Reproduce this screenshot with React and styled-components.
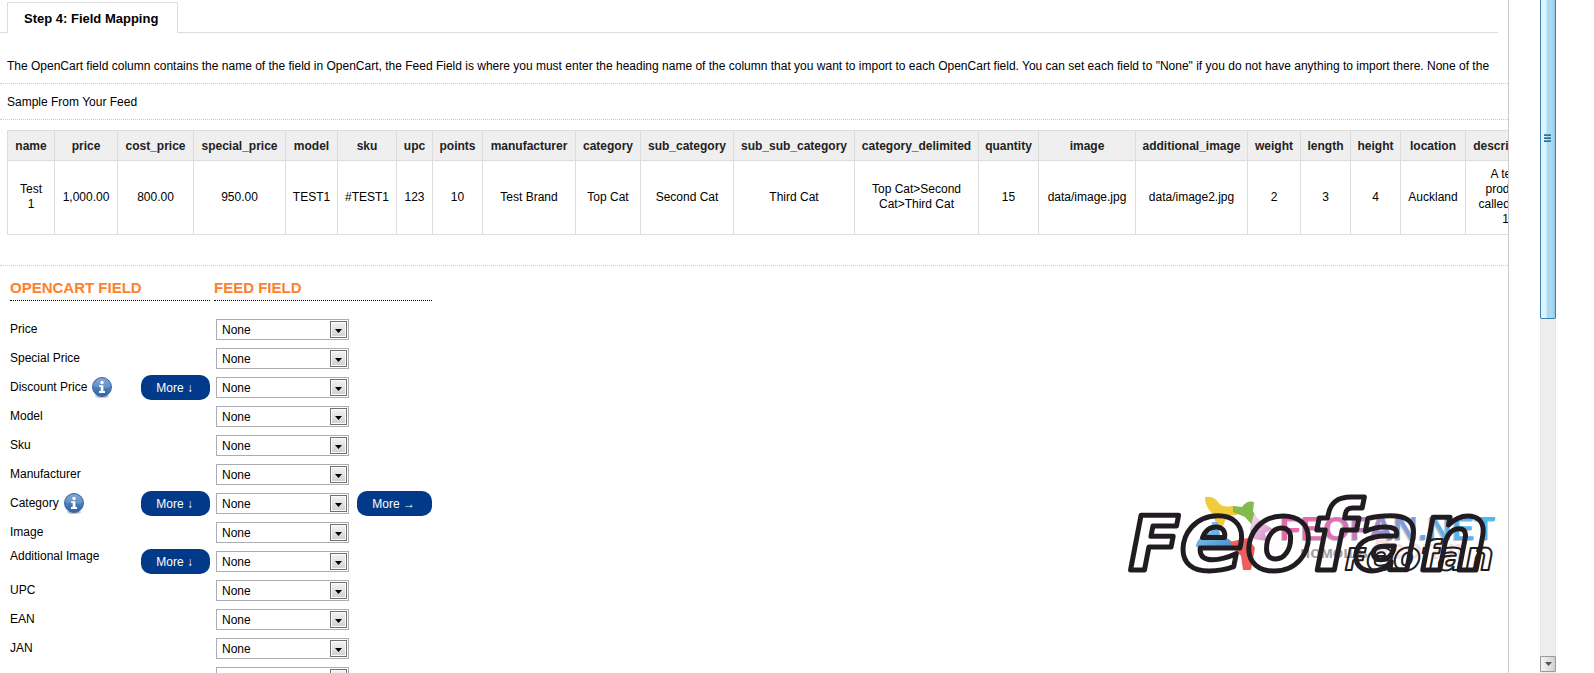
import { useId } from 'react';
import styled, { createGlobalStyle } from 'styled-components';

const GlobalStyle = createGlobalStyle`
  * {
    box-sizing: border-box;
  }

  body {
    margin: 0;
    background: #fff;
    color: #000;
    font-family: 'Liberation Sans', Arial, sans-serif;
    font-size: 12px;
    line-height: 15px;
  }
`;

const Page = styled.div`
  display: flex;
  height: 100vh;
  overflow: hidden;
`;

const Panel = styled.main`
  position: relative;
  flex: 1;
  min-width: 0;
  overflow: hidden;
  border-right: 1px solid #ccc;
`;

const Tabs = styled.div`
  display: flex;
  margin-right: 10px;
  padding: 2px 0 0 7px;
  box-shadow: inset 0 -1px #ddd;
`;

const Tab = styled.button`
  height: 31px;
  padding: 0 19px 0 16px;
  border: 1px solid #ddd;
  border-bottom: none;
  background: #fff;
  color: #000;
  font: bold 13px 'Liberation Sans', Arial, sans-serif;
`;

const Line = styled.p`
  margin: 0;
  padding: ${props => props.$top || 11}px 7px 9px;
  border-bottom: 1px dotted #ccc;
  white-space: nowrap;
`;

const SampleWrap = styled.div`
  padding: 10px 0 30px 7px;
  border-bottom: 1px dotted #ccc;
`;

const SampleTable = styled.table`
  width: 1538px;
  table-layout: fixed;
  border-collapse: collapse;
  text-align: center;

  th,
  td {
    border: 1px solid #ddd;
  }

  th {
    padding: 8px 0 6px;
    background: #efefef;
    color: #222;
  }

  td {
    padding: 6px 6px 7px;
    white-space: pre-line;
  }
`;

const Mapping = styled.form`
  display: grid;
  gap: 4px;
  padding: 13px 10px;
`;

const Row = styled.div`
  display: grid;
  grid-template-columns: 200px 218px;
  column-gap: 4px;
  height: 25px;
`;

const HeadRow = styled(Row)`
  height: auto;
  margin-bottom: 12px;
`;

const Heading = styled.h2`
  margin: 0;
  padding-bottom: 4px;
  border-bottom: 1px dotted #000;
  color: #ff802b;
  font-size: 15px;
  line-height: 17px;
`;

const NameCell = styled.div`
  display: flex;
  align-items: ${props => (props.$top ? 'flex-start' : 'center')};
  gap: 5px;
`;

const FeedCell = styled.div`
  display: flex;
  align-items: center;
  gap: 8px;
  padding-left: 2px;
`;

const MoreButton = styled.button`
  height: 25px;
  margin-left: auto;
  padding: 0 17px 0 15px;
  border: none;
  border-radius: 10px;
  background: #003a88;
  color: #fff;
  font: 12px 'Liberation Sans', Arial, sans-serif;
  white-space: nowrap;
  cursor: pointer;
`;

const SelectBox = styled.div`
  position: relative;
  width: 133px;
`;

const Select = styled.select`
  display: block;
  appearance: none;
  width: 100%;
  height: 21px;
  padding: 0 20px 0 5px;
  border: 1px solid #abadb3;
  border-radius: 0;
  background: #fff;
  color: #000;
  font: 12px 'Liberation Sans', Arial, sans-serif;
`;

const SelectArrow = styled.span`
  position: absolute;
  top: 2px;
  right: 2px;
  display: grid;
  place-items: center;
  width: 17px;
  height: 17px;
  padding-top: 3px;
  border: 1px solid #707070;
  background: linear-gradient(#f4f4f4, #cfcfcf);
  box-shadow: inset 0 0 0 1px #fcfcfc;
  pointer-events: none;
`;

const ScrollBar = styled.div`
  display: flex;
  flex-direction: column;
  justify-content: space-between;
  width: 16px;
  margin: 0 38px 0 31px;
  padding-bottom: 1px;
  background: #eee;
  border-left: 1px solid #e6e6e6;
  border-right: 1px solid #e6e6e6;
`;

const Thumb = styled.div`
  height: 319px;
  margin: 0 -1px;
  padding: 134px 0 0 3px;
  border: 1px solid #3c7fb1;
  border-top: none;
  border-radius: 0 0 2px 2px;
  background: linear-gradient(90deg, #dff3fd 0 5px, #a9dbf5 6px 11px, #8cc5e4);
`;

const Grip = styled.div`
  width: 7px;
  height: 2px;
  margin-bottom: 1px;
  background: #5493b5;
  border-bottom: 1px solid #3a6e8c;
`;

const ScrollDown = styled.button`
  display: grid;
  place-items: center;
  width: 16px;
  height: 16px;
  margin: 0 -1px;
  padding: 0;
  border: 1px solid #999;
  border-radius: 1px;
  background: linear-gradient(90deg, #f6f6f6, #d0d0d0);
`;

const Watermark = styled.svg`
  position: absolute;
  top: 490px;
  right: 8px;
  pointer-events: none;
`;

const sample = [
  { name: 'name', value: 'Test\n1', width: 47 },
  { name: 'price', value: '1,000.00', width: 63 },
  { name: 'cost_price', value: '800.00', width: 76 },
  { name: 'special_price', value: '950.00', width: 92 },
  { name: 'model', value: 'TEST1', width: 52 },
  { name: 'sku', value: '#TEST1', width: 59 },
  { name: 'upc', value: '123', width: 36 },
  { name: 'points', value: '10', width: 50 },
  { name: 'manufacturer', value: 'Test Brand', width: 93 },
  { name: 'category', value: 'Top Cat', width: 65 },
  { name: 'sub_category', value: 'Second Cat', width: 93 },
  { name: 'sub_sub_category', value: 'Third Cat', width: 121 },
  { name: 'category_delimited', value: 'Top Cat>Second\nCat>Third Cat', width: 124 },
  { name: 'quantity', value: '15', width: 60 },
  { name: 'image', value: 'data/image.jpg', width: 97 },
  { name: 'additional_image', value: 'data/image2.jpg', width: 112 },
  { name: 'weight', value: '2', width: 53 },
  { name: 'length', value: '3', width: 50 },
  { name: 'height', value: '4', width: 50 },
  { name: 'location', value: 'Auckland', width: 65 },
  { name: 'description', value: 'A test\nproduct\ncalled test\n1', width: 80 },
];

const fields = [
  { label: 'Price' },
  { label: 'Special Price' },
  { label: 'Discount Price', info: true, down: true },
  { label: 'Model' },
  { label: 'Sku' },
  { label: 'Manufacturer' },
  { label: 'Category', info: true, down: true, right: true },
  { label: 'Image' },
  { label: 'Additional Image', down: true, top: true },
  { label: 'UPC' },
  { label: 'EAN' },
  { label: 'JAN' },
];

const InfoIcon = () => {
  const id = useId();
  return (
    <svg width="20" height="21" viewBox="0 0 20 21" aria-hidden="true">
      <defs>
        <linearGradient id={id} x1="0" y1="0" x2="0" y2="1">
          <stop offset="0" stopColor="#6f9bd0" />
          <stop offset="1" stopColor="#2f62a8" />
        </linearGradient>
      </defs>
      <ellipse cx="10" cy="19" rx="7" ry="2" fill="#c4c4c4" />
      <circle cx="10" cy="10" r="9.5" fill={`url(#${id})`} stroke="#3c69a5" />
      <path d="M1.5 10a8.5 8.5 0 0 1 17 0c-5 2-11-1-17 0z" fill="#fff" opacity=".14" />
      <circle cx="10" cy="5.5" r="1.7" fill="#fff" />
      <path d="M7.2 8.3h4.2v5.8H13V16H7v-1.9h1.7V10H7.2z" fill="#fff" />
    </svg>
  );
};

const ArrowDown = ({ color = '#000' }) => (
  <svg width="7" height="4" viewBox="0 0 7 4" aria-hidden="true">
    <path d="M0 0h7L3.5 4z" fill={color} />
  </svg>
);

const FeedSelect = props => (
  <SelectBox>
    <Select defaultValue="None" {...props}>
      <option>None</option>
      {sample.map(col => <option key={col.name}>{col.name}</option>)}
    </Select>
    <SelectArrow><ArrowDown /></SelectArrow>
  </SelectBox>
);

const FieldRow = ({ label, info, down, right, top }) => {
  const id = useId();
  return (
    <Row>
      <NameCell $top={top}>
        <label htmlFor={id}>{label}</label>
        {info && <InfoIcon />}
        {down && <MoreButton type="button">More ↓</MoreButton>}
      </NameCell>
      <FeedCell>
        <FeedSelect id={id} />
        {right && <MoreButton type="button">More →</MoreButton>}
      </FeedCell>
    </Row>
  );
};

const Logo = () => (
  <Watermark width="380" height="90" viewBox="0 0 380 90" role="img" aria-label="Feofan.net">
    <defs>
      <linearGradient id="net" gradientUnits="userSpaceOnUse" x1="160" y1="0" x2="374" y2="0">
        <stop offset="0" stopColor="#ee62a8" />
        <stop offset=".28" stopColor="#dc72b6" />
        <stop offset=".5" stopColor="#9093d2" />
        <stop offset=".75" stopColor="#5fb2e6" />
        <stop offset="1" stopColor="#4fb9ee" />
      </linearGradient>
      <linearGradient id="pink" x1="0" y1="0" x2="1" y2="1">
        <stop offset="0" stopColor="#f7e3f2" />
        <stop offset="1" stopColor="#d383c4" />
      </linearGradient>
      <linearGradient id="blue" x1="0" y1="0" x2="1" y2="1">
        <stop offset="0" stopColor="#8fd0f2" />
        <stop offset="1" stopColor="#3f8ac8" />
      </linearGradient>
    </defs>

    {/* pinwheel of coloured figures */}
    <path d="M85 7q9-1 13 5t14 4l9 2-4 7-10 1-4 10-7-1-2-10q-9-7-9-18z" fill="#f2cb3b" />
    <path d="M113 16l9 1q5-7 12-5l-1 9q3 6 7 13l-7 2-8-9-12-5z" fill="#83b94d" />
    <path d="M134 24q7 9 19 15l-8 4 2 8-14-2-3-10z" fill="url(#pink)" />
    <path d="M92 32h6l2 14q9 1 16 10l-10 3q-15-4-30-2 0-10 15-15z" fill="url(#blue)" />
    <path d="M110 52l12-3 6-1 7 10-4 22h-8l-2-14q-8-8-11-14z" fill="#ee5f5b" />

    <g fontFamily="'Liberation Sans', Arial, sans-serif" fontWeight="bold">
      <text x="159" y="51" fontSize="34" fill="#c4c4c4">FEOFAN.NET</text>
      <text x="160" y="50" fontSize="34" fill="url(#net)">FEOFAN.NET</text>
      <text x="180" y="68" fontSize="17" fill="#a2a0a0">помощь</text>
      <text x="252" y="69" fontSize="28" fontStyle="italic" fill="#b33a3a" opacity=".15">Feofan</text>
    </g>

    <g
      fontFamily="'DejaVu Sans', sans-serif"
      fontWeight="bold"
      fontStyle="italic"
      fill="none"
      stroke="#211c22"
      strokeLinejoin="round"
    >
      <text x="9" y="80" fontSize="74" strokeWidth="5">
        F<tspan fontSize="97">eofan</tspan>
      </text>
      <text x="225" y="80" fontSize="31" strokeWidth="2">
        F<tspan fontSize="40">eofan</tspan>
      </text>
    </g>
  </Watermark>
);

const App = () => (
  <>
    <GlobalStyle />
    <Page>
      <Panel>
        <Tabs>
          <Tab type="button">Step 4: Field Mapping</Tab>
        </Tabs>
        <Line $top={26}>
          The OpenCart field column contains the name of the field in OpenCart, the Feed Field is where you must enter the heading name of the column that you want to import to each OpenCart field. You can set each field to "None" if you do not have anything to import there. None of the
        </Line>
        <Line>Sample From Your Feed</Line>
        <SampleWrap>
          <SampleTable>
            <colgroup>
              {sample.map(col => <col key={col.name} width={col.width} />)}
            </colgroup>
            <thead>
              <tr>{sample.map(col => <th key={col.name} scope="col">{col.name}</th>)}</tr>
            </thead>
            <tbody>
              <tr>{sample.map(col => <td key={col.name}>{col.value}</td>)}</tr>
            </tbody>
          </SampleTable>
        </SampleWrap>
        <Mapping>
          <HeadRow>
            <Heading>OPENCART FIELD</Heading>
            <Heading>FEED FIELD</Heading>
          </HeadRow>
          {fields.map(field => <FieldRow key={field.label} {...field} />)}
          <Row>
            <NameCell />
            <FeedCell><FeedSelect aria-label="ISBN" /></FeedCell>
          </Row>
        </Mapping>
        <Logo />
      </Panel>
      <ScrollBar>
        <Thumb>
          <Grip />
          <Grip />
          <Grip />
        </Thumb>
        <ScrollDown type="button" aria-label="Scroll down"><ArrowDown color="#555" /></ScrollDown>
      </ScrollBar>
    </Page>
  </>
);

export default App;
